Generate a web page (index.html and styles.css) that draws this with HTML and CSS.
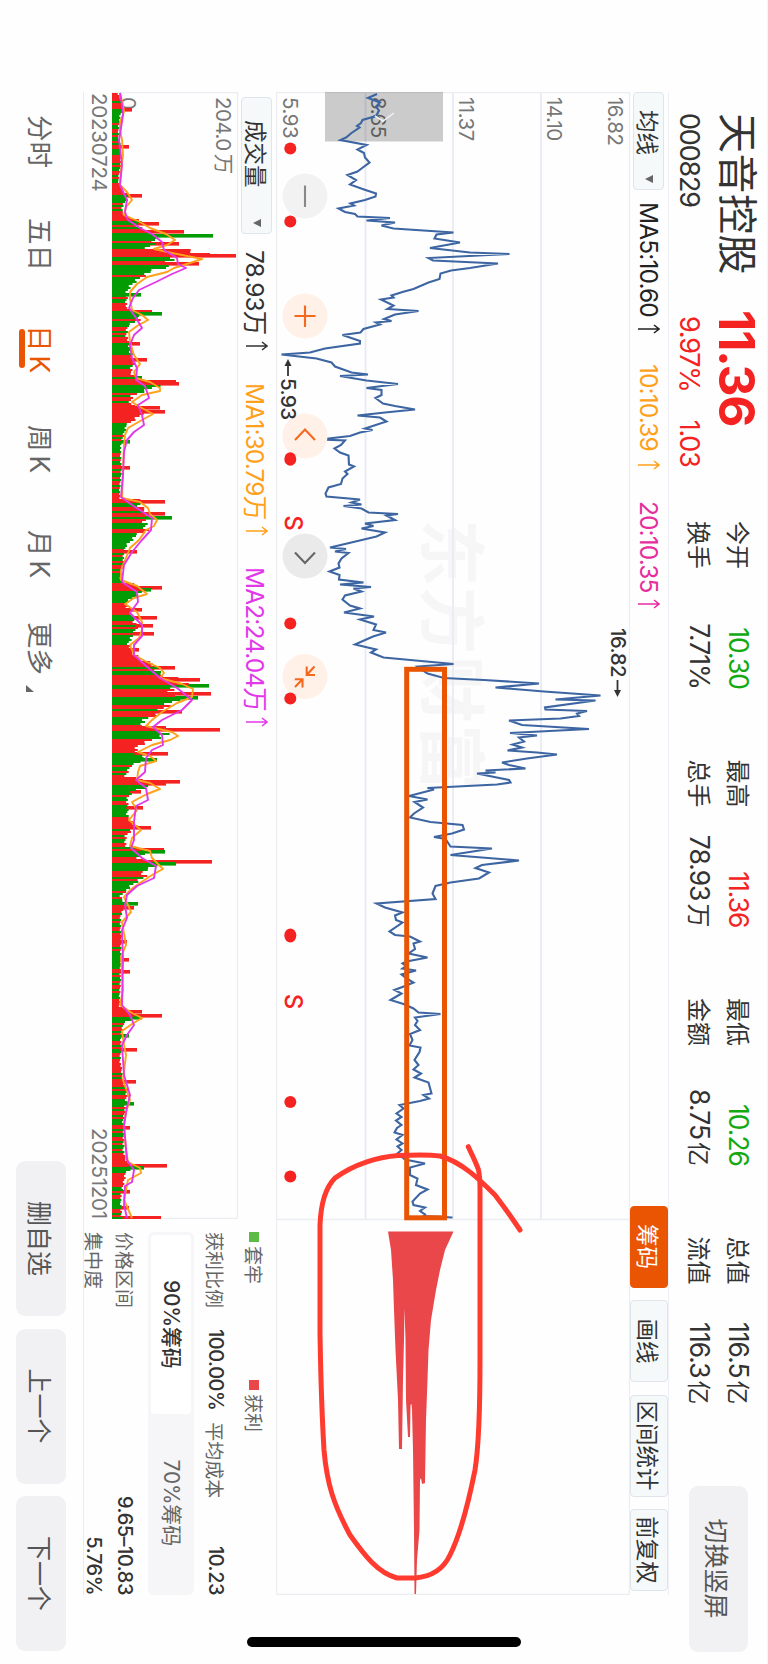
FILE: index.html
```html
<!DOCTYPE html>
<html lang="zh-CN">
<head>
  <meta charset="UTF-8" />
  <meta name="viewport" content="width=device-width, initial-scale=1.0" />
  <title>天音控股 000829</title>
  <link rel="stylesheet" href="styles.css">
</head>
<body>
  <div class="phone">
  <div class="screen">
    <header class="header">
      <div class="stock">
        <div class="stock-name">天音控股</div>
        <div class="stock-code">000829</div>
      </div>
      <div class="price red">
        <div class="price-now">11.36</div>
        <div class="price-change"><span>9.97%</span><span>1.03</span></div>
      </div>
      <div class="quotes">
        <div class="quote"><span>今开</span><span class="num green">10.30</span></div>
        <div class="quote"><span>最高</span><span class="num red">11.36</span></div>
        <div class="quote"><span>最低</span><span class="num green">10.26</span></div>
        <div class="quote"><span>总值</span><span class="num">116.5<em>亿</em></span></div>
        <div class="quote"><span>换手</span><span class="num">7.71%</span></div>
        <div class="quote"><span>总手</span><span class="num">78.93<em>万</em></span></div>
        <div class="quote"><span>金额</span><span class="num">8.75<em>亿</em></span></div>
        <div class="quote"><span>流值</span><span class="num">116.3<em>亿</em></span></div>
      </div>
      <button class="btn btn-switch">切换竖屏</button>
    </header>

    <div class="toolbar">
      <button class="select select-ma">均线<i class="caret"></i></button>
      <span class="ma ma5">MA5:10.60<svg class="up" viewBox="0 0 10 22"><path d="M5 22V1M1 6l4-5 4 5"/></svg></span>
      <span class="ma ma10">10:10.39<svg class="up" viewBox="0 0 10 22"><path d="M5 22V1M1 6l4-5 4 5"/></svg></span>
      <span class="ma ma20">20:10.35<svg class="up" viewBox="0 0 10 22"><path d="M5 22V1M1 6l4-5 4 5"/></svg></span>
      <div class="tools">
        <button class="tool active">筹码</button>
        <button class="tool">画线</button>
        <button class="tool wide">区间统计</button>
        <button class="tool">前复权</button>
      </div>
    </div>

    <svg class="price-chart" viewBox="92 138 1503 354">
      <text class="watermark" x="519" y="341" textLength="272">东方财富</text>
      <path class="grid" d="M92 227H1219M92 315H1219M92 402.5H1219"/>
      <path class="frame" d="M92.5 138.5H1594.5V491.5H92.5ZM1219.5 138V492"/>
      <g class="axis">
        <text x="97" y="160">16.82</text>
        <text x="97" y="221.500">14.10</text>
        <text x="97" y="309">11.37</text>
        <text x="97" y="397">8.65</text>
        <text x="97" y="485.500">5.93</text>
      </g>
      <rect class="mask" x="92" y="325" width="49.500" height="118"/>
      <g transform="translate(0 768) scale(1 -1)">
        <polyline class="line" id="priceLine"/>
        <path class="chips" d="M1231.500 453.500L1250 445L1270 440L1290 436L1320 431L1350 428.500L1380 427.500L1420 426L1483 425L1484 422L1478 421L1480 420L1530 419.500L1560 417L1594 416V414.500L1530 414L1450 413L1410 412L1404 411.500L1405 410.500L1437 410V408L1400 406L1340 405.500L1308 404.500L1340 404L1380 403L1449 402V399L1400 398L1350 395.500L1310 394L1280 393L1250 391L1231.500 388Z"/>
        <path class="mask-arrow" d="M116 375L121 383L113 394"/>
      </g>
      <g class="dots">
        <circle cx="148.500" cy="477.700" r="6"/>
        <circle cx="221.500" cy="477.700" r="6"/>
      </g>
      <circle class="knob grey" cx="196" cy="463" r="22.500"/>
      <path class="icon grey" d="M185.500 463h21.500"/>
      <circle class="knob" cx="316" cy="463" r="22.500"/>
      <path class="icon" d="M305.500 463h21.500M316 452.500v21"/>
      <circle class="knob" cx="436" cy="463" r="22.500"/>
      <path class="icon" d="M440 453l-10.500 10 10.500 10"/>
      <circle class="knob dark" cx="556" cy="463" r="22.500"/>
      <path class="icon dark" d="M552.500 453l10.500 10-10.500 10"/>
      <circle class="knob" cx="676.500" cy="463" r="22.500"/>
      <path class="icon" d="M666.500 461.300h8.500v-8.300M666.500 453.500l8.500 7.800M687.500 465.500h-8.200v7.700M687 473l-7.700-7.500"/>
      <g class="dots">
        <ellipse cx="459" cy="477.700" rx="6.800" ry="6"/>
        <circle cx="623.500" cy="477.700" r="6"/>
        <circle cx="698.500" cy="477.700" r="6"/>
        <ellipse cx="935.500" cy="477.700" rx="7" ry="6"/>
        <circle cx="1102" cy="477.700" r="6"/>
        <circle cx="1176.500" cy="477.700" r="6"/>
        <text x="523" y="483.500">S</text>
        <text x="1001.500" y="483.500">S</text>
      </g>
      <g class="mark">
        <text x="628" y="157.500">16.82</text>
        <path d="M680 150.500H692"/>
        <path class="head" d="M697 150.500l-7-3.500v7z"/>
        <text x="378" y="487">5.93</text>
        <path d="M376 480H364"/>
        <path class="head" d="M359 480l7-3.500v7z"/>
      </g>
      <rect class="range" x="669.300" y="323.500" width="548.500" height="37.800"/>
      <path class="pen" d="M1146.700 299.700C1155 296 1162 292 1170 289.500C1178 287.500 1190 288 1200 288H1360C1410 288 1445 289 1470 293C1505 300 1535 308 1555 318C1572 326 1577 340 1578 353V371C1573 390 1556 403 1535 418C1505 434 1485 441 1450 444C1400 447 1360 447.500 1333 448H1225C1200 447 1186 441 1178 433C1164 414 1157 390 1155.500 370C1154.500 350 1154.500 338 1156 328C1162 306 1180 288 1195 273Q1212 260 1230 248"/>
    </svg>

    <div class="bottom">
      <div class="volume">
        <div class="toolbar">
          <button class="select select-vol">成交量<i class="caret"></i></button>
          <span class="ma vol">78.93万<svg class="up" viewBox="0 0 10 22"><path d="M5 22V1M1 6l4-5 4 5"/></svg></span>
          <span class="ma ma1">MA1:30.79万<svg class="up" viewBox="0 0 10 22"><path d="M5 22V1M1 6l4-5 4 5"/></svg></span>
          <span class="ma ma2">MA2:24.04万<svg class="up" viewBox="0 0 10 22"><path d="M5 22V1M1 6l4-5 4 5"/></svg></span>
        </div>
        <svg class="volume-chart" viewBox="92 530 1127 126">
          <path class="frame" d="M92.500 530.500H1218.500V656H92.500Z"/>
          <text class="axis" x="97" y="552">204.0<tspan dx="3">万</tspan></text>
          <text class="axis" x="97" y="647">0</text>
          <g transform="translate(0 656) scale(1 -1)">
            <g id="bars"></g>
            <polyline class="line-ma1" id="ma1"/>
            <polyline class="line-ma2" id="ma2"/>
          </g>
        </svg>
        <div class="dates"><span>20230724</span><span>20251201</span></div>
      </div>

      <div class="chip-panel">
        <div class="legend">
          <span><i class="box box-green"></i>套牢</span>
          <span><i class="box box-red"></i>获利</span>
        </div>
        <div class="row">
          <span>获利比例</span><b class="ratio">100.00%</b>
          <span class="cost">平均成本</span><b>10.23</b>
        </div>
        <div class="segment">
          <span class="on">90%筹码</span>
          <span>70%筹码</span>
        </div>
        <div class="row low"><span>价格区间</span><b>9.65–10.83</b></div>
        <div class="row low"><span>集中度</span><b>5.76%</b></div>
      </div>
    </div>

    <footer class="footer">
      <nav class="tabs">
        <a>分时</a>
        <a>五日</a>
        <a class="k current">日K</a>
        <a class="k">周K</a>
        <a class="k">月K</a>
        <a>更多<i class="corner"></i></a>
      </nav>
      <div class="actions">
        <button class="btn">删自选</button>
        <button class="btn">上一个</button>
        <button class="btn">下一个</button>
      </div>
    </footer>
    <div class="home-bar"></div>
  </div>
  </div>

  <script src="chart.js"></script>
</body>
</html>
```

FILE: styles.css
```css
body {
  margin: 0;
  background: #fff;
}
.phone {
  width: 768px;
  height: 1664px;
  overflow: hidden;
}
/* landscape page turned a quarter clockwise */
.screen {
  position: relative;
  width: 1664px;
  height: 768px;
  box-sizing: border-box;
  transform: translateX(768px) rotate(90deg);
  transform-origin: 0 0;
  font-family: Inter, "Noto Sans CJK SC", sans-serif;
  color: #333;
  background: #fefefe;
  white-space: nowrap;
}
button {
  font-family: inherit;
  color: inherit;
  padding: 0;
  border: none;
}
.red {
  color: #f52222;
}
.green {
  color: #12a912;
}

/* header */
.header {
  display: flex;
  height: 99px;
  box-sizing: border-box;
  padding-left: 113px;
  border-top: 1px solid #f5f5f7;
}
.stock {
  width: 197px;
}
.stock-name {
  font-size: 40px;
  line-height: 60px;
  letter-spacing: 0.5px;
}
.stock-code {
  font-size: 27px;
  line-height: 36px;
  letter-spacing: -1.2px;
}
.price {
  width: 211px;
}
.price-now {
  font-size: 49.5px;
  font-weight: 700;
  line-height: 60px;
  letter-spacing: -1.2px;
}
.price-change {
  display: flex;
  gap: 28px;
  padding-left: 6px;
  font-size: 27px;
  line-height: 36px;
  letter-spacing: -1.2px;
}
.quotes {
  display: grid;
  grid-template-columns: repeat(4, 168px);
  grid-template-rows: 39px 39px;
  column-gap: 70.5px;
  padding-top: 8px;
  height: 78px;
}
.quote {
  display: flex;
  justify-content: space-between;
  align-items: center;
  font-size: 24px;
}
.num {
  font-size: 26.5px;
  letter-spacing: -1px;
}
.num em {
  margin-left: 3px;
  font-style: normal;
  font-size: 24px;
  letter-spacing: 0;
}
.btn {
  height: 50px;
  border-radius: 9px;
  background: #f1f1f4;
  color: #555;
  font-size: 25px;
}
.btn-switch {
  width: 166px;
  height: 59px;
  margin: 19px 0 0 81px;
}

/* toolbars */
.toolbar {
  display: flex;
  align-items: center;
  height: 39px;
  box-sizing: border-box;
  font-size: 24.5px;
  letter-spacing: -0.9px;
}
.screen > .toolbar {
  width: 1503px;
  margin-left: 92px;
  border-top: 1.5px solid #eef0f5;
}
.select {
  display: flex;
  align-items: center;
  justify-content: space-between;
  height: 31px;
  box-sizing: border-box;
  border: 1px solid #dfe5ec;
  border-radius: 4px;
  background: #f5f9fa;
  font-size: 22.5px;
}
.select-ma {
  width: 98px;
  padding: 0 6px 0 17px;
  margin-right: 12px;
}
.select-vol {
  width: 137px;
  margin: 0 16px 0 5px;
  padding: 0 6px 0 22px;
}
.caret {
  border: 4.5px solid transparent;
  border-top: 8px solid #666;
  border-bottom: 0;
}
.ma {
  display: flex;
  align-items: center;
  justify-content: space-between;
}
.up {
  width: 10px;
  height: 22px;
  fill: none;
  stroke: currentColor;
  stroke-width: 1.5;
}
.ma5 { width: 132px; margin-right: 30px; color: #222; }
.ma10 { width: 106px; margin-right: 31px; color: #ffa11a; }
.ma20 { width: 108px; color: #e62e9d; }
.vol { width: 101px; margin-right: 32px; }
.ma1 { width: 153px; margin-right: 31px; color: #ffa11a; }
.ma2 { width: 160px; color: #e338ea; }
.tools {
  display: flex;
  gap: 12.5px;
  margin: 0 4px 0 auto;
}
.tool {
  width: 82px;
  height: 38px;
  box-sizing: border-box;
  border: 1px solid #e0e5eb;
  border-radius: 4px;
  background: #f5f9fa;
  font-size: 22.5px;
}
.tool.wide {
  width: 102px;
}
.tool.active {
  background: #ea5504;
  border-color: #ea5504;
  color: #fff;
}

/* price chart */
.price-chart {
  display: block;
  width: 1503px;
  height: 354px;
  margin-left: 92px;
}
.frame {
  fill: none;
  stroke: #ebedf1;
  stroke-width: 1.3;
}
.grid {
  stroke: #e8ebf4;
  stroke-width: 1.8;
}
.watermark {
  font-size: 67px;
  font-weight: 700;
  fill: #f6f6f6;
}
.axis {
  font-size: 20.5px;
  letter-spacing: -0.5px;
  fill: #777;
}
.mask {
  fill: #000;
  fill-opacity: 0.2;
}
.mask-arrow {
  fill: none;
  stroke: #f2f2f2;
  stroke-width: 1.5;
}
.line {
  fill: none;
  stroke: #3c65a2;
  stroke-width: 2.1;
}
.chips {
  fill: #e94749;
}
.dots {
  fill: #f52222;
  font-size: 24px;
  font-weight: 500;
  text-anchor: middle;
}
.knob { fill: #fff0e8; }
.knob.grey { fill: #f2f2f2; }
.knob.dark { fill: #eaeaea; }
.icon {
  fill: none;
  stroke: #f5691e;
  stroke-width: 2.1;
}
.icon.grey { stroke: #888; }
.icon.dark { stroke: #666; }
.mark {
  font-size: 20.5px;
  font-weight: 500;
  letter-spacing: -0.6px;
  fill: #333;
  stroke-width: 1.8;
}
.mark path {
  stroke: #333;
}
.mark .head {
  stroke: none;
}
.range {
  fill: none;
  stroke: #ea5504;
  stroke-width: 5;
}
.pen {
  fill: none;
  stroke: #ff3b30;
  stroke-width: 5;
  stroke-linecap: round;
}

/* volume and chips */
.bottom {
  display: flex;
  height: 193px;
  width: 1503px;
  box-sizing: border-box;
  margin-left: 92px;
  border-bottom: 1px solid #e9ebef;
}
.volume {
  width: 1127px;
}
.volume .toolbar {
  height: 38px;
}
.volume-chart {
  display: block;
  width: 1127px;
  height: 126px;
}
.bar-r { fill: #f52222; }
.bar-g { fill: #049c04; }
.line-ma1,
.line-ma2 {
  fill: none;
  stroke: #ffa11a;
  stroke-width: 1.9;
  stroke-linejoin: round;
}
.line-ma2 {
  stroke: #e338ea;
}
.dates {
  display: flex;
  justify-content: space-between;
  padding-left: 1px;
  font-size: 20.5px;
  line-height: 26px;
  letter-spacing: -0.2px;
  color: #777;
}
.chip-panel {
  width: 363px;
  padding-left: 13px;
  font-size: 19px;
  color: #666;
}
.legend {
  display: flex;
  height: 43px;
  align-items: center;
}
.legend span {
  display: flex;
  align-items: center;
  width: 148px;
}
.box {
  width: 10px;
  height: 10px;
  margin-right: 4px;
}
.box-green { background: #5bbb44; }
.box-red { background: #e94749; }
.row {
  display: flex;
  align-items: center;
  justify-content: space-between;
  height: 34px;
}
.row b {
  font-size: 20px;
  font-weight: 500;
  letter-spacing: -0.5px;
  color: #333;
}
.row .ratio {
  margin-left: 21px;
}
.row .cost {
  margin: 0 auto 0 12px;
}
.segment {
  display: flex;
  height: 46px;
  box-sizing: border-box;
  margin: 5px 0 7px;
  padding: 3px;
  border-radius: 6px;
  background: #f6f6f9;
  font-size: 21px;
  line-height: 40px;
  text-align: center;
  letter-spacing: -0.2px;
}
.segment span {
  width: 179px;
  border-radius: 4px;
}
.segment .on {
  background: #fff;
  color: #333;
  font-weight: 500;
}
.row.low {
  height: 31px;
}

/* footer */
.footer {
  display: flex;
  justify-content: space-between;
  align-items: center;
  height: 83px;
  padding: 0 13px 0 115px;
}
.tabs {
  display: flex;
  font-size: 26.5px;
  color: #666;
}
.tabs a {
  width: 103px;
}
.tabs a:nth-child(2) { width: 107px; }
.tabs a:nth-child(3) { width: 100px; }
.tabs a:nth-child(4) { width: 105px; }
.tabs a:nth-child(5) { width: 92px; }
.tabs .k {
  letter-spacing: 4px;
}
.tabs .current {
  position: relative;
  color: #ea5504;
}
.current::after {
  content: "";
  position: absolute;
  left: 4px;
  bottom: -3px;
  width: 39px;
  height: 6px;
  border-radius: 3px;
  background: #ea5504;
}
.corner {
  display: inline-block;
  margin-left: 10px;
  border-left: 7px solid transparent;
  border-bottom: 8px solid #666;
  vertical-align: -4px;
}
.actions {
  display: flex;
  gap: 12.5px;
}
.actions .btn {
  width: 155px;
}
.home-bar {
  position: absolute;
  left: 1637px;
  top: 247px;
  width: 10px;
  height: 274px;
  border-radius: 5px;
  background: #000;
}
```

FILE: chart.js
```js
// x, y pairs, y counted upwards
const price = `94 377 98 368 102.5 380 106.5 376 110.5 379 116 376 120 362.5 123 361 126 357 127.5 359.5 133 351.5 137.5 346 140 340.5 145 366.5 149.5 357.5 153 364 157.5 365 162.5 369.5 168.5 361.5 171.5 357.5 175 347.5 180 356 184.5 350 189.5 364 193.5 376 196.5 375.5 200 365 203.5 350.5 205.5 354 208.5 338.5 212 345 214 355 216.5 357.5 218 390 220.5 366.5 222.5 395 225.5 381.5 228.5 393.5 232.5 453.5 234.5 436.5 238.5 434.5 242.5 460 248 430 252.5 470 254 509.5 258 428.5 260.5 433 263.5 498 268 470 270.5 451 273.5 440.5 279 439.5 282.5 428.5 289 413.5 292 402.5 295.5 391.5 297.5 393.5 299.5 381 305.5 393.5 309 387.5 311 418.5 314.5 395 319 384 321 391.5 322.5 376 324.5 380 329 363.5 332.5 360.5 335 342.5 341 360 343.5 360 348.5 325 352.5 310 354.5 281.5 358.5 316.5 362.5 331.5 366.5 335 372.5 351.5 374.5 368 376 340 380.5 366.5 384 398 388 366.5 390 381.5 395 381.5 398 375.5 403.5 383 406 395 409.5 415 412.5 385 415.5 357.5 417.5 380 421.5 386.5 428.5 365 430 372.5 432.5 360 436 350 439.5 320 440.5 345 445 341 448.5 334.5 452.5 340 455.5 348.5 464.5 349 466.5 354 471.5 345 474 347.5 478.5 342.5 484 341 487.5 328.5 493.5 325.5 496.5 326.5 499.5 360 502.5 351.5 504.5 361.5 506 343.5 508.5 361.5 512.5 368.5 514 398 515.5 386.5 520 395 523.5 365 526 373.5 528.5 361.5 532.5 385 536.5 376.5 544 345 547.5 330 549 346 551.5 335 553 348.5 558.5 341.5 563.5 338.5 567.5 339.5 571.5 329.5 575 339.5 579.5 339 582.5 363.5 584.5 340 587 371 588.5 353.5 591.5 361.5 595.5 345 599.5 342.5 605.5 350 608.5 360 612.5 344 616.5 374 619.5 360 624.5 376 630 373.5 632.5 386 636.5 373 644.5 355 649.5 376 652.5 371 657.5 383.5 664 453.5
666.5 417.5 673.5 427.5 678 444 680 484 683.5 539 687.5 495.5 691.5 544 695.5 600.5 699.5 555.5 700.5 595.5 707.5 545 709.5 545.5 711 587 713.5 577 716 579 718.5 560.5 720.5 509 725 522 729 589 733 510 735.5 537 737.5 519 741.5 524 744.5 512.5 747.5 522 750.5 507.5 752.5 537 754.5 557 758.5 527 762.5 502 765 509 768.5 525.5 770.5 485.5 772.5 495.5 773.5 477 780 509 782.5 510.5 784.5 497 788 427.5 789.5 434 796 409 799.5 427.5 802 414.5 807.5 423 813.5 414 817.5 410 822 430.5 825 462.5 829.5 464 833.5 452 837 434 839 445.5 846.5 450.5 848.5 492 855 450.5 860.5 519 865 482 868 475.5 872.5 489 878.5 479 882.5 450.5 886 435.5 893.5 432.5 899 435.5 903.5 376.5 907.5 385 912.5 402.5 915.5 395 920 396 922.5 402.5 931.5 389.5 935 395 936.5 410 941.5 420 943.5 413.5 949 415 953.5 408.5 957.5 427.5 961.5 406.5 963.5 402.5 966 406 968.5 402.5 970.5 416 974.5 401.5 978.5 406.5 982.5 413.5 986 405 990 394.5 993.5 401.5 1000 390.5 1004 403.5 1008.5 413.5 1012.5 418.5 1014 440.5 1017.5 415 1021 417.5 1025 415 1030 420 1034 410 1040 412.5 1045.5 409.5 1047.5 420.5 1052 419.5 1060 414.5 1065 418.5 1069.5 413.5 1073.5 421 1077.5 414.5 1082.5 428.5 1093.5 431.5 1095 423.5 1098.5 429 1101 420 1105 399.5 1108.5 403.5 1113.5 396.5 1117 401.5 1120.5 396 1125 401.5 1128 397 1132.5 394.5 1135 402.5 1139.5 396.5 1143.5 402.5 1146.5 397.5 1150 401.5 1153.5 397.5 1159.5 405 1163.5 425 1167.5 410 1175 410 1178.5 417.5 1185 416 1189.5 427.5 1193.5 420 1201.5 412.5 1205 413.5 1207.5 425 1211 420 1214.5 425 1216 423.5 1217.5 452.5`;

const ma1 = `93 8 105 11 112 12 122 8 130 8 140 10 155 11 170 9 185 8 192 15 200 20 207 14 215 12 222 28 228 38 234 54 240 63 245 55 249 42 253 60 259 90 263 78 268 62 272 55 277 35 284 25 292 18 300 18 310 20 315 30 320 36 326 25 332 17 342 18 355 22 364 28 372 22 378 24 382 38 388 48 391 48 395 30 402 20 407 28 414 41 420 30 428 16 435 13 445 12 470 11 498 10 502 28 508 36 514 38 520 45 526 42 530 34 540 27 548 18 558 14 570 9 580 9 586 25 594 35 598 22 604 13 612 25 622 30 630 30 638 27 645 18 655 22 662 35 668 48 673 52 678 48 684 70 689 81 697 80 703 65 712 50 720 40 726 34 732 60 736 66 740 58 745 40 752 26 756 38 761 44 766 28 772 26 780 25 783 38 789 48 794 35 802 20 810 25 820 17 830 29 838 20 846 18 851 38 858 40 863 45 869 51 875 40 885 25 890 18 897 12 905 16 912 19 922 10 945 14 957 9 990 11 1005 8 1013 20 1018 30 1024 20 1031 10 1045 12 1055 14 1080 11 1100 18 1112 14 1125 12 1150 14 1162 16 1168 28 1173 29 1180 16 1200 12 1218 20`;
const ma2 = `93 8 105 10 115 11 128 9 140 7 165 10 185 8 200 15 212 13 220 16 228 28 234 40 242 50 250 52 258 65 264 66 268 74 274 60 282 44 290 27 298 21 308 17 318 24 328 30 335 22 345 18 358 20 368 25 380 24 386 33 398 37 405 26 415 30 425 32 432 22 440 15 452 12 475 11 497 9 505 20 518 40 530 39 540 30 552 20 565 12 582 10 592 25 602 26 613 18 625 30 636 30 645 22 655 22 665 33 678 48 688 65 700 80 710 70 720 50 727 41 735 50 745 51 750 40 758 34 772 33 780 24 788 34 800 36 806 24 822 22 840 22 848 19 858 30 866 44 878 42 886 25 895 15 905 13 918 15 930 10 960 11 1005 10 1015 18 1025 22 1035 15 1045 10 1075 12 1095 18 1107 15 1125 12 1160 15 1170 22 1182 20 1186 13 1205 12 1218 15`;

// usual height of the bars
const level = `93 7 100 10 106 12 115 9 125 7 135 7 146 9 160 10 170 8 180 7 190 12 196 18 208 10 216 14 219 32 224 28 230 35 240 48 247 40 249 82 253 96 256 70 262 55 267 60 270 42 278 28 285 20 292 16 305 15 312 26 318 30 325 17 333 16 343 18 350 20 360 24 370 20 378 26 382 55 388 40 395 22 403 20 408 36 415 30 425 15 435 12 450 9 467 10 497 8 499 33 505 30 512 40 521 35 530 38 535 25 545 15 560 12 580 9 584 26 590 34 595 26 600 18 608 14 616 24 625 26 633 24 642 18 650 20 658 30 664 48 672 48 678 70 684 80 690 62 698 70 703 62 712 52 718 36 724 30 728 52 733 60 738 45 745 28 752 25 758 38 765 20 775 15 780 40 785 42 790 22 800 16 815 17 825 25 835 15 845 15 850 36 858 28 864 50 870 32 876 36 882 25 890 15 895 9 904 14 915 9 940 10 980 9 1005 8 1011 22 1017 26 1022 12 1035 10 1060 9 1075 11 1090 16 1104 15 1120 12 1155 13 1163 18 1168 22 1173 14 1185 12 1200 9 1218 11`;
const spikes = `109 20r 146 17r 195 30r 223 47r 231 72r 235 101g 243 67r 255 124r 263 87r 294 29g 311 40r 313 50g 343 28r 359 35r 377 30g 381 64r 383 67r 407 48r 411 53r 441 18g 467 18r 501 53r 513 53r 517 60g 551 25r 587 50r 589 39g 609 30r 617 45r 625 41r 633 42r 649 27r 667 63r 679 88r 685 97g 693 99r 697 86g 711 70r 727 54r 729 108r 753 56r 759 45g 781 68r 783 54r 791 29r 807 31r 827 39r 849 52r 851 53g 861 100r 863 64g 903 26g 907 22r 941 15r 959 17r 971 18r 1011 30r 1015 50r 1017 30g 1035 17g 1049 25r 1081 24r 1103 22g 1127 18r 1165 55r 1167 32g 1191 18r 1207 17r 1217 49r`;
// end of each colour run: r, g or m for days that alternate
const runs = `100r 104m 108r 122g 140m 148m 154g 163r 185m 195r 203g 210m 219r 230m 233r 240g 243r 249g 257r 260g 265r 275g 277r 297g 299r 302g 311r 319g 337m 343r 355g 365r 368g 377r 379g 385r 390g 405m 423r 432g 440m 448g 493m 502r 514m 516r 518g 522r 528g 533r 548g 566m 572m 582g 590r 598g 603m 612r 628m 633g 635r 645g 664r 676m 685r 689g 696r 701g 712m 716r 724g 731r 739g 752r 763g 778m 785r 792g 806m 816g 828r 848m 850r 857g 863r 871g 876r 880m 889g 899m 905g 913r 933m 943r 957m 966g 1003m 1016r 1023g 1060m 1072r 1078m 1085r 1098m 1107g 1155m 1166r 1173g 1185r 1198m 1204g 1219m`;

function pairs(text) {
  const n = text.trim().split(/\s+/).map(Number);
  const out = [];
  for (let i = 0; i < n.length; i += 2) out.push([n[i], n[i + 1]]);
  return out;
}

document.getElementById('priceLine').setAttribute('points', price);
document.getElementById('ma1').setAttribute('points', ma1);
document.getElementById('ma2').setAttribute('points', ma2);

const levels = pairs(level);
const runList = runs.split(' ').map((r) => [parseInt(r), r.slice(-1)]);

function levelAt(x) {
  for (let i = 1; i < levels.length; i++) {
    const [x0, y0] = levels[i - 1];
    const [x1, y1] = levels[i];
    if (x <= x1) return y0 + (y1 - y0) * (x - x0) / (x1 - x0);
  }
  return levels[levels.length - 1][1];
}

function bar(color, x, width, h) {
  return `<rect class="bar-${color}" x="${x}" y="0" width="${width}" height="${h.toFixed(1)}"/>`;
}

const pattern = 'rggrgrrgrgggrrgrggrrg';
let html = '';

// single high days are drawn wider, below the rest
const s = spikes.split(' ');
for (let i = 0; i < s.length; i += 2) {
  html += bar(s[i + 1].slice(-1), Number(s[i]) - 1, 3.6, parseInt(s[i + 1]));
}

let i = 0;
for (let x = 93; x < 1219; x += 2) {
  const h = levelAt(x) * (0.82 + 0.22 * ((i * 7) % 11) / 11);
  const run = runList.find((r) => x < r[0]);
  let color = run ? run[1] : 'r';
  if (color === 'm') color = pattern[i % pattern.length];
  html += bar(color, x, 2, h);
  i++;
}
document.getElementById('bars').innerHTML = html;
```
